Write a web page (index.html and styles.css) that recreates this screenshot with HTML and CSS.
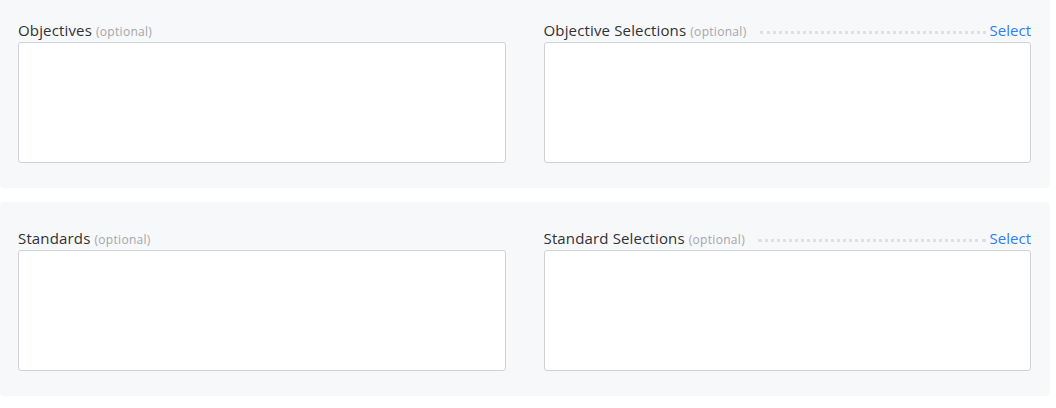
FILE: index.html
```html
<!DOCTYPE html>
<html lang="en">
<head>
  <meta charset="UTF-8" />
  <meta name="viewport" content="width=device-width, initial-scale=1.0"/>
  <title>Alignment</title>
  <link rel="stylesheet" href="styles.css">
</head>
<body>
  <div class="page">
    <section class="panel">
      <div class="field">
        <div class="field-head">
          <label for="objectives">Objectives <span class="hint">(optional)</span></label>
        </div>
        <textarea id="objectives"></textarea>
      </div>
      <div class="field">
        <div class="field-head">
          <label for="objSel">Objective Selections <span class="hint">(optional)</span></label>
          <span class="leader"></span>
          <a href="#" class="select-link">Select</a>
        </div>
        <textarea id="objSel"></textarea>
      </div>
    </section>

    <section class="panel">
      <div class="field">
        <div class="field-head">
          <label for="standards">Standards <span class="hint">(optional)</span></label>
        </div>
        <textarea id="standards"></textarea>
      </div>
      <div class="field">
        <div class="field-head">
          <label for="stdSel">Standard Selections <span class="hint">(optional)</span></label>
          <span class="leader"></span>
          <a href="#" class="select-link">Select</a>
        </div>
        <textarea id="stdSel"></textarea>
      </div>
    </section>
  </div>
</body>
</html>
```

FILE: styles.css
```css
body {
  margin: 0;
  background: #fff;
  font-family: "Open Sans", Arial, sans-serif;
  color: #333;
}
.page {
  width: 1050px;
  margin-top: -6px;
  display: flex;
  flex-direction: column;
  gap: 14px;
}
.panel {
  background: #f7f8fa;
  border-radius: 4px;
  padding: 26px 19px 25px 18px;
  display: grid;
  grid-template-columns: 1fr 1fr;
  column-gap: 38px;
}
.field-head {
  display: flex;
  align-items: baseline;
  height: 20px;
  margin-bottom: 2px;
}
label {
  font-size: 15px;
  line-height: 20px;
  letter-spacing: 0.15px;
  color: #2f3236;
  white-space: nowrap;
}
.hint {
  font-size: 12px;
  letter-spacing: 0.3px;
  color: #a3a6ab;
}
.leader {
  flex: 1;
  margin: 0 4px 0 13px;
  height: 0;
  border-bottom: 3px dotted #dcdfe3;
  align-self: center;
  position: relative;
  top: 2px;
}
.select-link {
  font-size: 15px;
  color: #2d7ff0;
  text-decoration: none;
}
textarea {
  display: block;
  box-sizing: border-box;
  width: 100%;
  height: 121px;
  margin: 0;
  border: 1px solid #cfd3d8;
  border-radius: 3px;
  background: #fff;
  resize: none;
}
```
